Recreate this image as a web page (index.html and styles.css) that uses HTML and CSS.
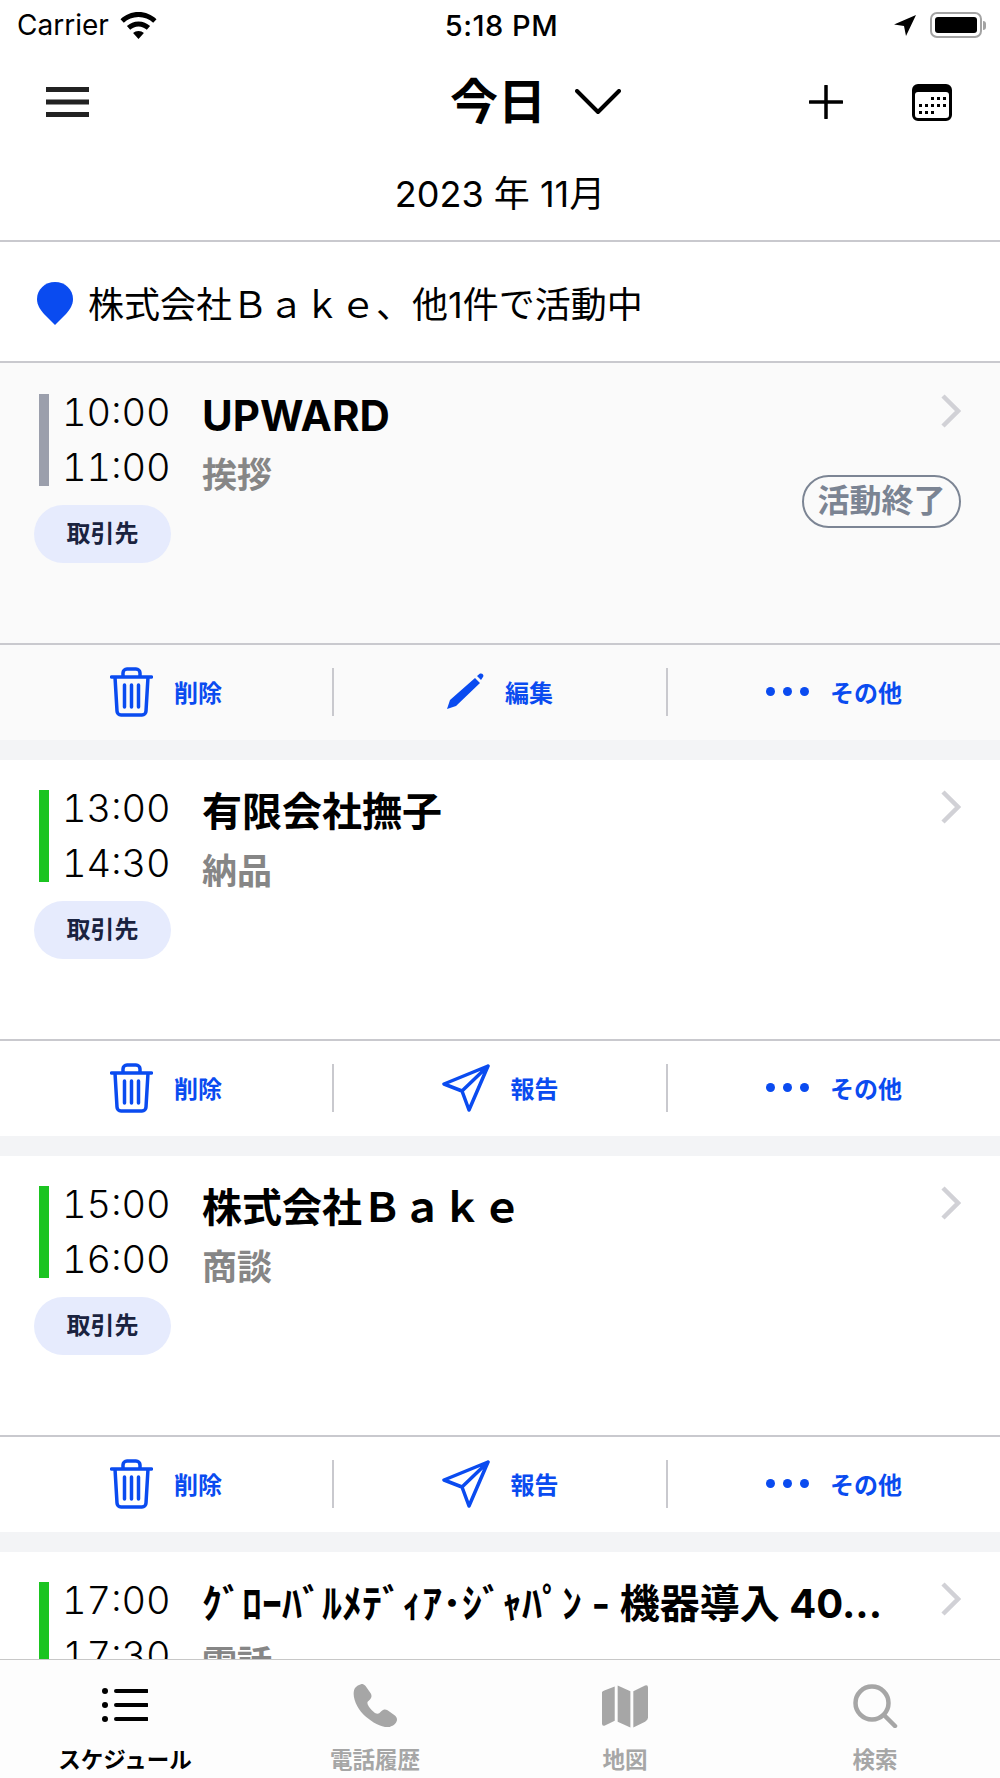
FILE: index.html
```html
<!DOCTYPE html>
<html lang="ja">
<head>
<meta charset="utf-8"/>
<title>スケジュール</title>
<link rel="stylesheet" href="styles.css">
</head>
<body>
<div class="app">

  <div class="status">
    <div class="status-left">
      <span>Carrier</span>
      <svg class="wifi" viewBox="0 0 37 27"><path d="M18.5 0C11.500 0 5.300 2.700 .5 7.200l3.300 3.600C7.700 7.200 12.800 5 18.500 5s10.800 2.200 14.700 5.800l3.300-3.600C31.700 2.700 25.500 0 18.500 0zM18.500 9.500c-4.500 0-8.500 1.700-11.600 4.600l3.300 3.600c2.200-2 5.100-3.300 8.300-3.300s6.100 1.300 8.300 3.300l3.300-3.600c-3.100-2.900-7.100-4.600-11.600-4.600zM18.500 19c-2.100 0-4 .8-5.400 2.100l5.400 5.900 5.400-5.900c-1.400-1.300-3.300-2.100-5.400-2.100z"/></svg>
    </div>
    <div class="status-time">5:18 PM</div>
    <div class="status-right">
      <svg class="loc" viewBox="0 0 22 21"><path d="M22 0L0 9.500 10 11l2 10z"/></svg>
      <div class="battery"><div class="battery-fill"></div></div>
      <div class="battery-nub"></div>
    </div>
  </div>

  <div class="nav">
    <svg class="nav-menu" viewBox="0 0 43 30"><path d="M0 2.500h43M0 15h43M0 27.500h43"/></svg>
    <div class="nav-title">
      <span>今日</span>
      <svg class="nav-chevron" viewBox="0 0 46 26"><path d="M2 2l21 21L44 2"/></svg>
    </div>
    <svg class="nav-plus" viewBox="0 0 34 34"><path d="M17 1v32M1 17h32"/></svg>
    <svg class="nav-cal" viewBox="0 0 40 37">
      <path d="M6 0h28a6 6 0 0 1 6 6v25a6 6 0 0 1-6 6H6a6 6 0 0 1-6-6V6a6 6 0 0 1 6-6zm0 8a3 3 0 0 0-3 3v20a3 3 0 0 0 3 3h28a3 3 0 0 0 3-3V11a3 3 0 0 0-3-3z"/>
      <g>
        <rect x="19" y="13" width="3" height="3"/><rect x="25" y="13" width="3" height="3"/><rect x="31" y="13" width="3" height="3"/>
        <rect x="7" y="20" width="3" height="3"/><rect x="13" y="20" width="3" height="3"/><rect x="19" y="20" width="3" height="3"/><rect x="25" y="20" width="3" height="3"/><rect x="31" y="20" width="3" height="3"/>
        <rect x="7" y="27" width="3" height="3"/><rect x="13" y="27" width="3" height="3"/><rect x="19" y="27" width="3" height="3"/>
      </g>
    </svg>
  </div>

  <div class="month">2023 年 11月</div>

  <div class="active">
    <svg class="pin" viewBox="0 0 36 43"><path d="M18 0c10 0 18 7.500 18 17 0 6-3 10-7 15L18 43 7 32C3 27 0 23 0 17 0 7.500 8 0 18 0z"/></svg>
    <span>株式会社Ｂａｋｅ、他1件で活動中</span>
  </div>

  <div class="list">

    <div class="card card-done">
      <div class="card-body">
        <div class="card-left">
          <div class="times times-done"><span>10:00</span><span>11:00</span></div>
          <div class="pill">取引先</div>
        </div>
        <div class="card-main">
          <div class="title title-latin">UPWARD</div>
          <div class="sub">挨拶</div>
        </div>
        <div class="card-side">
          <svg class="chevron" viewBox="0 0 20 34"><path d="M2 2l15 15L2 32"/></svg>
          <div class="badge">活動終了</div>
        </div>
      </div>
      <div class="actions">
        <div class="action">
          <svg class="ic-trash" viewBox="0 0 43 50"><use href="#trash"/></svg>
          <span>削除</span>
        </div>
        <div class="action">
          <svg class="ic-pencil" viewBox="0 0 37 37"><path d="M0 36l3-9L28 5l5 5L9 33zM30 3l3-2.500q2-.5 3 1t0 2.500l-2 3z"/></svg>
          <span>編集</span>
        </div>
        <div class="action">
          <svg class="ic-dots" viewBox="0 0 43 9"><circle cx="4.500" cy="4.500" r="4.500"/><circle cx="21.500" cy="4.500" r="4.500"/><circle cx="38.500" cy="4.500" r="4.500"/></svg>
          <span>その他</span>
        </div>
      </div>
    </div>

    <div class="card">
      <div class="card-body">
        <div class="card-left">
          <div class="times"><span>13:00</span><span>14:30</span></div>
          <div class="pill">取引先</div>
        </div>
        <div class="card-main">
          <div class="title">有限会社撫子</div>
          <div class="sub">納品</div>
        </div>
        <div class="card-side">
          <svg class="chevron" viewBox="0 0 20 34"><path d="M2 2l15 15L2 32"/></svg>
        </div>
      </div>
      <div class="actions">
        <div class="action">
          <svg class="ic-trash" viewBox="0 0 43 50"><use href="#trash"/></svg>
          <span>削除</span>
        </div>
        <div class="action">
          <svg class="ic-send" viewBox="0 0 48 48"><use href="#send"/></svg>
          <span>報告</span>
        </div>
        <div class="action">
          <svg class="ic-dots" viewBox="0 0 43 9"><circle cx="4.500" cy="4.500" r="4.500"/><circle cx="21.500" cy="4.500" r="4.500"/><circle cx="38.500" cy="4.500" r="4.500"/></svg>
          <span>その他</span>
        </div>
      </div>
    </div>

    <div class="card">
      <div class="card-body">
        <div class="card-left">
          <div class="times"><span>15:00</span><span>16:00</span></div>
          <div class="pill">取引先</div>
        </div>
        <div class="card-main">
          <div class="title">株式会社Ｂａｋｅ</div>
          <div class="sub">商談</div>
        </div>
        <div class="card-side">
          <svg class="chevron" viewBox="0 0 20 34"><path d="M2 2l15 15L2 32"/></svg>
        </div>
      </div>
      <div class="actions">
        <div class="action">
          <svg class="ic-trash" viewBox="0 0 43 50"><use href="#trash"/></svg>
          <span>削除</span>
        </div>
        <div class="action">
          <svg class="ic-send" viewBox="0 0 48 48"><use href="#send"/></svg>
          <span>報告</span>
        </div>
        <div class="action">
          <svg class="ic-dots" viewBox="0 0 43 9"><circle cx="4.500" cy="4.500" r="4.500"/><circle cx="21.500" cy="4.500" r="4.500"/><circle cx="38.500" cy="4.500" r="4.500"/></svg>
          <span>その他</span>
        </div>
      </div>
    </div>

    <div class="card">
      <div class="card-body">
        <div class="card-left">
          <div class="times"><span>17:00</span><span>17:30</span></div>
          <div class="pill">取引先</div>
        </div>
        <div class="card-main">
          <div class="title">ｸﾞﾛｰﾊﾞﾙﾒﾃﾞｨｱ･ｼﾞｬﾊﾟﾝ - 機器導入 40...</div>
          <div class="sub">電話</div>
        </div>
        <div class="card-side">
          <svg class="chevron" viewBox="0 0 20 34"><path d="M2 2l15 15L2 32"/></svg>
        </div>
      </div>
    </div>

  </div>

  <div class="tabs">
    <div class="tab tab-on">
      <svg class="tab-icon" viewBox="0 0 46 36"><circle cx="3" cy="3" r="3"/><circle cx="3" cy="17" r="3"/><circle cx="3" cy="31" r="3"/><path class="tab-lines" d="M14 3h31M14 17h31M14 31h31"/></svg>
      <span>スケジュール</span>
    </div>
    <div class="tab">
      <svg class="tab-icon" viewBox="0 0 42 42"><path d="M9 0C7 0 2 2 1 6c-2 8 4 19 11 25s16 11 23 10c4-1 7-4 7-7 0-2-1-3-2-4l-7-5c-2-1-4-1-6 1l-2 2c-2 1-4 0-7-3s-5-6-4-8l2-2c2-2 2-4 1-6l-5-7C11 1 10 0 9 0z"/></svg>
      <span>電話履歴</span>
    </div>
    <div class="tab">
      <svg class="tab-icon" viewBox="0 0 47 44"><path d="M0 8v32q0 3 3 2l10-5V2L3 6Q0 7 0 8zM16 1v37l13 6V7zM32 7v37l12-6q3-2 3-4V3q0-3-3-2z"/></svg>
      <span>地図</span>
    </div>
    <div class="tab">
      <svg class="tab-icon tab-search" viewBox="0 0 44 44"><circle cx="19" cy="19" r="16.500"/><path d="M31 31l11 11"/></svg>
      <span>検索</span>
    </div>
  </div>

</div>

<svg class="defs" width="0" height="0">
  <defs>
    <g id="trash">
      <path d="M1.500 10h40M13 10V6a4 4 0 0 1 4-4h9a4 4 0 0 1 4 4v4M5 10l2 34a4 4 0 0 0 4 4h21a4 4 0 0 0 4-4l2-34M14.500 18v22M21.500 18v22M28.500 18v22"/>
    </g>
    <g id="send">
      <path d="M46 2L2 20l18 7 7 19zM46 2L20 27"/>
    </g>
  </defs>
</svg>
</body>
</html>
```

FILE: styles.css
```css
body {
  margin: 0;
  background: #fff;
  font-family: Inter, "Noto Sans CJK JP", sans-serif;
  color: #000;
}

.app {
  height: 1778px;
  display: flex;
  flex-direction: column;
  overflow: hidden;
}

.defs {
  position: absolute;
}

/* status bar */
.status {
  height: 50px;
  padding: 0 14px 0 17px;
  display: flex;
  align-items: center;
  justify-content: space-between;
  font-size: 28px;
  flex: none;
}

.status-left {
  width: 340px;
  display: flex;
  align-items: center;
  gap: 11px;
}

.wifi {
  width: 37px;
  height: 27px;
}

.status-time {
  font-size: 29px;
  font-weight: 500;
  letter-spacing: 0.5px;
}

.status-right {
  width: 340px;
  display: flex;
  align-items: center;
  justify-content: flex-end;
}

.loc {
  width: 22px;
  height: 21px;
  margin-right: 14px;
}

.battery {
  width: 52px;
  height: 26px;
  box-sizing: border-box;
  border: 2px solid #a3a3a3;
  border-radius: 7px;
  padding: 3px;
}

.battery-fill {
  height: 100%;
  background: #000;
  border-radius: 3px;
}

.battery-nub {
  width: 3px;
  height: 9px;
  margin-left: 1px;
  background: #a3a3a3;
  border-radius: 0 3px 3px 0;
}

/* nav */
.nav {
  height: 110px;
  padding: 0 48px 6px 46px;
  display: flex;
  align-items: center;
  flex: none;
  box-sizing: border-box;
}

.nav-menu {
  width: 43px;
  height: 30px;
  fill: none;
  stroke: #222;
  stroke-width: 5;
}

.nav-title {
  margin-left: 361px;
  display: flex;
  align-items: center;
  gap: 29px;
  font-size: 48px;
  font-weight: 700;
  line-height: 56px;
}

.nav-chevron {
  width: 46px;
  height: 26px;
  fill: none;
  stroke: #000;
  stroke-width: 4;
  stroke-linecap: round;
  stroke-linejoin: round;
}

.nav-plus {
  width: 34px;
  height: 34px;
  margin-left: 188px;
  fill: none;
  stroke: #000;
  stroke-width: 3.500;
  stroke-linecap: round;
}

.nav-cal {
  width: 40px;
  height: 37px;
  margin-left: 69px;
}

.month {
  padding-top: 6px;
  height: 74px;
  border-bottom: 2px solid #c9c9ce;
  flex: none;
  text-align: center;
  font-size: 36px;
  line-height: 56px;
}

/* active row */
.active {
  height: 119px;
  padding-left: 37px;
  display: flex;
  align-items: center;
  gap: 15px;
  border-bottom: 2px solid #c9c9ce;
  flex: none;
  font-size: 36px;
}

.pin {
  width: 36px;
  height: 43px;
  fill: #0a4bf0;
  margin-top: 4px;
}

/* cards */
.list {
  flex: 1;
  min-height: 0;
  overflow: hidden;
  background: #f3f4f6;
}

.card {
  background: #fff;
  margin-bottom: 20px;
}

.card-body {
  height: 281px;
  box-sizing: border-box;
  padding: 30px 39px 0 39px;
  display: flex;
  border-bottom: 2px solid #c9c9ce;
}

.card-done,
.card-done .card-body {
  background: #fafafa;
}

.card-done .card-body {
  padding-top: 31px;
  height: 282px;
}

.card-left {
  width: 163px;
  flex: none;
}

.times {
  height: 92px;
  box-sizing: border-box;
  border-left: 10px solid #1bc421;
  padding-left: 13px;
  display: flex;
  flex-direction: column;
  justify-content: space-between;
  font-size: 38px;
  font-weight: 300;
  line-height: 37px;
  font-variant-numeric: tabular-nums;
}

.times-done {
  border-left-color: #9b9fac;
}

.pill {
  width: 137px;
  height: 58px;
  margin: 19px 0 0 -5px;
  border-radius: 29px;
  background: #e6ebfd;
  color: #1a2340;
  font-size: 24px;
  font-weight: 700;
  line-height: 58px;
  text-align: center;
}

.card-main {
  flex: 1;
  min-width: 0;
  margin-right: 40px;
}

.title {
  font-size: 40px;
  font-weight: 700;
  line-height: 44px;
  white-space: nowrap;
  overflow: hidden;
}

.title-latin {
  font-size: 42px;
}

.sub {
  margin-top: 15px;
  font-size: 35px;
  font-weight: 700;
  line-height: 44px;
  color: #868686;
}

.card-side {
  display: flex;
  flex-direction: column;
  align-items: flex-end;
  flex: none;
}

.chevron {
  width: 20px;
  height: 34px;
  fill: none;
  stroke: #d1d1d6;
  stroke-width: 4.500;
}

.badge {
  margin-top: 47px;
  width: 159px;
  height: 53px;
  box-sizing: border-box;
  border: 2px solid #7c8594;
  border-radius: 27px;
  color: #7b8493;
  font-size: 32px;
  font-weight: 700;
  line-height: 47px;
  text-align: center;
}

/* action row */
.actions {
  height: 95px;
  box-sizing: border-box;
  padding-bottom: 2px;
  display: flex;
  align-items: center;
}

.action {
  flex: 1;
  height: 48px;
  display: flex;
  align-items: center;
  justify-content: center;
  gap: 21px;
  color: #0a4bf0;
  font-size: 24px;
  font-weight: 700;
}

.action + .action {
  border-left: 2px solid #c9c9ce;
}

.ic-trash {
  width: 43px;
  height: 50px;
  fill: none;
  stroke: #0a4bf0;
  stroke-width: 3.500;
  stroke-linecap: round;
  stroke-linejoin: round;
}

.ic-pencil {
  width: 37px;
  height: 37px;
  fill: #0a4bf0;
}

.ic-send {
  width: 48px;
  height: 48px;
  fill: none;
  stroke: #0a4bf0;
  stroke-width: 3.500;
  stroke-linejoin: round;
  stroke-linecap: round;
}

.ic-dots {
  width: 43px;
  height: 9px;
  fill: #0a4bf0;
}

/* tab bar */
.tabs {
  height: 119px;
  box-sizing: border-box;
  border-top: 1px solid #c8c8c8;
  background: #fdfdfd;
  display: flex;
  flex: none;
}

.tab {
  flex: 1;
  height: 100%;
  position: relative;
  display: flex;
  flex-direction: column;
  align-items: center;
  color: #a6a6a6;
  fill: #a6a6a6;
  font-size: 22.500px;
  font-weight: 700;
}

.tab span {
  margin-top: auto;
  padding-bottom: 3px;
  line-height: 30px;
}

.tab-on {
  color: #000;
  fill: #000;
}

.tab-icon {
  height: 44px;
  width: 46px;
  margin-top: 24px;
}

.tab-lines {
  fill: none;
  stroke: #000;
  stroke-width: 4;
  stroke-linecap: round;
}

.tab-search {
  fill: none;
  stroke: #a6a6a6;
  stroke-width: 4.500;
  stroke-linecap: round;
}
```
